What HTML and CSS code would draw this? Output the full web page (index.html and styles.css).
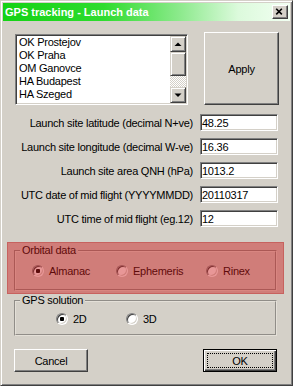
FILE: index.html
```html
<!DOCTYPE html>
<html lang="en">
<head>
    <meta charset="UTF-8">
    <title>GPS tracking - Launch data</title>
    <link rel="stylesheet" href="styles.css">
</head>
<body>
    <div class="window">
        <div class="titlebar">
            <span class="title">GPS tracking - Launch data</span>
            <span class="close">
                <svg width="16" height="14" viewBox="0 0 16 14">
                    <path d="M4.5 3.5 L10.5 9.5 M10.5 3.5 L4.5 9.5" stroke="#000" stroke-width="1.7" fill="none"/>
                </svg>
            </span>
        </div>

        <div class="content">
            <div class="top-row">
                <div class="listbox">
                    <ul class="items">
                        <li>OK Prostejov</li>
                        <li>OK Praha</li>
                        <li>OM Ganovce</li>
                        <li>HA Budapest</li>
                        <li>HA Szeged</li>
                        <li>OE Innsbruck</li>
                    </ul>
                    <div class="scrollbar">
                        <div class="sb-btn">
                            <svg width="12" height="12" viewBox="0 0 12 12"><polygon points="2.5,8 6,4.5 9.5,8" fill="#000"/></svg>
                        </div>
                        <div class="sb-thumb"></div>
                        <div class="sb-track"></div>
                        <div class="sb-btn">
                            <svg width="12" height="12" viewBox="0 0 12 12"><polygon points="2.5,4.5 6,8 9.5,4.5" fill="#000"/></svg>
                        </div>
                    </div>
                </div>
                <button class="btn apply">Apply</button>
            </div>

            <!-- launch site values -->
            <div class="fields">
                <div class="field"><label for="lat">Launch site latitude (decimal N+ve)</label><input type="text" id="lat" value="48.25"></div>
                <div class="field"><label for="lon">Launch site longitude (decimal W-ve)</label><input type="text" id="lon" value="16.36"></div>
                <div class="field"><label for="qnh">Launch site area QNH (hPa)</label><input type="text" id="qnh" value="1013.2"></div>
                <div class="field"><label for="date">UTC date of mid flight (YYYYMMDD)</label><input type="text" id="date" value="20110317"></div>
                <div class="field"><label for="time">UTC time of mid flight (eg.12)</label><input type="text" id="time" value="12"></div>
            </div>

            <div class="marked">
                <fieldset class="group orbital">
                    <legend>Orbital data</legend>
                    <div class="radios">
                        <label class="radio"><input type="radio" name="orbit" checked>Almanac</label>
                        <label class="radio"><input type="radio" name="orbit">Ephemeris</label>
                        <label class="radio"><input type="radio" name="orbit">Rinex</label>
                    </div>
                </fieldset>
                <div class="highlight"></div>
            </div>

            <fieldset class="group gps">
                <legend>GPS solution</legend>
                <div class="radios">
                    <label class="radio"><input type="radio" name="solution" checked>2D</label>
                    <label class="radio"><input type="radio" name="solution">3D</label>
                </div>
            </fieldset>

            <div class="actions">
                <button class="btn">Cancel</button>
                <button class="btn default"><span class="focus">OK</span></button>
            </div>
        </div>
    </div>
</body>
</html>
```

FILE: styles.css
```css
body {
    margin: 0;
    font-family: "Liberation Sans", Arial, sans-serif;
    font-size: 11px;
    letter-spacing: -0.25px;
    color: #000;
}
.window {
    box-sizing: border-box;
    width: 293px;
    height: 386px;
    background-color: #d4d0c8;
    border: 1px solid;
    border-color: #d4d0c8 #404040 #404040 #d4d0c8;
    box-shadow: inset 1px 1px 0 #fff, inset -1px -1px 0 #808080;
    padding: 2px;
}
.titlebar {
    height: 18px;
    display: flex;
    align-items: center;
    justify-content: space-between;
    padding: 0 2px;
    background: linear-gradient(90deg, #14d214 0%, #2edc2e 35%, #8eea8e 62%, #dcfadc 82%, #f2fff2 100%);
}
.title {
    color: #fff;
    font-weight: bold;
    font-size: 11px;
    letter-spacing: 0;
}
.close {
    display: flex;
    width: 16px;
    height: 14px;
    box-sizing: border-box;
    background-color: #d4d0c8;
    border: 1px solid;
    border-color: #fff #404040 #404040 #fff;
    box-shadow: inset -1px -1px 0 #808080;
}
.close svg {
    margin: -1px 0 0 -1px;
}
.content {
    padding: 11px 12px 0 11px;
}
.top-row {
    display: flex;
    justify-content: space-between;
    align-items: flex-start;
}
.listbox {
    box-sizing: border-box;
    width: 173px;
    height: 71px;
    margin: 2px 0 0 1px;
    display: flex;
    background-color: #fff;
    border: 1px solid;
    border-color: #808080 #fff #fff #808080;
    box-shadow: inset 1px 1px 0 #404040, inset -1px -1px 0 #d4d0c8;
    padding: 1px;
}
.items {
    flex: 1;
    list-style: none;
    margin: 0;
    padding: 0 0 0 2px;
    overflow: hidden;
    line-height: 13px;
}
.scrollbar {
    width: 16px;
    display: flex;
    flex-direction: column;
}
.sb-btn,
.sb-thumb {
    box-sizing: border-box;
    background-color: #d4d0c8;
    border: 1px solid;
    border-color: #d4d0c8 #404040 #404040 #d4d0c8;
    box-shadow: inset 1px 1px 0 #fff, inset -1px -1px 0 #808080;
}
.sb-btn {
    height: 16px;
    display: flex;
    align-items: center;
    justify-content: center;
}
.sb-thumb {
    height: 24px;
}
.sb-track {
    flex: 1;
    background: repeating-conic-gradient(#fff 0 25%, #d4d0c8 0 50%) 0 0 / 2px 2px;
}
.btn {
    box-sizing: border-box;
    background-color: #d4d0c8;
    border: 1px solid;
    border-color: #fff #404040 #404040 #fff;
    box-shadow: inset -1px -1px 0 #808080;
    font-family: "Liberation Sans", Arial, sans-serif;
    font-size: 11px;
    letter-spacing: -0.25px;
    color: #000;
    padding: 0;
}
.apply {
    width: 75px;
    height: 73px;
    margin-right: -1px;
}
.fields {
    margin-top: 9px;
    display: flex;
    flex-direction: column;
    gap: 7px;
}
.field {
    display: flex;
    justify-content: flex-end;
    align-items: center;
    height: 17px;
}
.field label {
    margin-right: 7px;
    white-space: nowrap;
}
.field input {
    box-sizing: border-box;
    width: 78px;
    height: 17px;
    margin: 0;
    padding: 0 0 0 1px;
    font-family: "Liberation Sans", Arial, sans-serif;
    font-size: 11px;
    letter-spacing: -0.25px;
    color: #000;
    background-color: #fff;
    border: 1px solid;
    border-color: #808080 #fff #fff #808080;
    box-shadow: inset 1px 1px 0 #404040, inset -1px -1px 0 #d4d0c8;
    outline: none;
}
.marked {
    position: relative;
    margin-top: 17px;
}
.highlight {
    position: absolute;
    left: -7px;
    right: -6px;
    top: -2px;
    bottom: -3px;
    background-color: rgba(205, 25, 25, 0.45);
    border: 1px solid rgba(170, 20, 20, 0.25);
    box-sizing: border-box;
}
.group {
    margin: 0 1px 0 0;
    padding: 0;
    min-width: 0;
    border: 2px groove #e4e0d8;
}
.group legend {
    margin-left: 4px;
    padding: 0 2px;
    line-height: 13px;
}
.radios {
    display: grid;
}
.orbital .radios {
    grid-template-columns: 84px 90px auto;
    padding: 7px 0 12px 16px;
}
.gps {
    margin-top: 3px;
}
.gps .radios {
    grid-template-columns: 70px auto;
    padding: 5px 0 9px 40px;
}
.radio {
    display: flex;
    align-items: center;
    height: 13px;
    white-space: nowrap;
}
.radio input {
    appearance: none;
    -webkit-appearance: none;
    box-sizing: border-box;
    width: 12px;
    height: 12px;
    margin: 0 5px 0 0;
    border-radius: 50%;
    border: 1px solid;
    border-color: #808080 #fff #fff #808080;
    box-shadow: inset 1px 1px 0 #404040, inset -1px -1px 0 #d4d0c8;
    background-color: #fff;
}
.radio input:checked {
    background: radial-gradient(circle, #000 0 2px, #fff 2.5px);
}
.actions {
    display: flex;
    justify-content: space-between;
    margin: 13px 1px 0 0;
}
.actions .btn {
    width: 74px;
    height: 23px;
}
.btn.default {
    display: flex;
    border: 1px solid #000;
    box-shadow: inset 1px 1px 0 #fff, inset -1px -1px 0 #404040, inset -2px -2px 0 #808080;
}
.focus {
    flex: 1;
    margin: 3px;
    border: 1px dotted #000;
    display: flex;
    align-items: center;
    justify-content: center;
}
```
